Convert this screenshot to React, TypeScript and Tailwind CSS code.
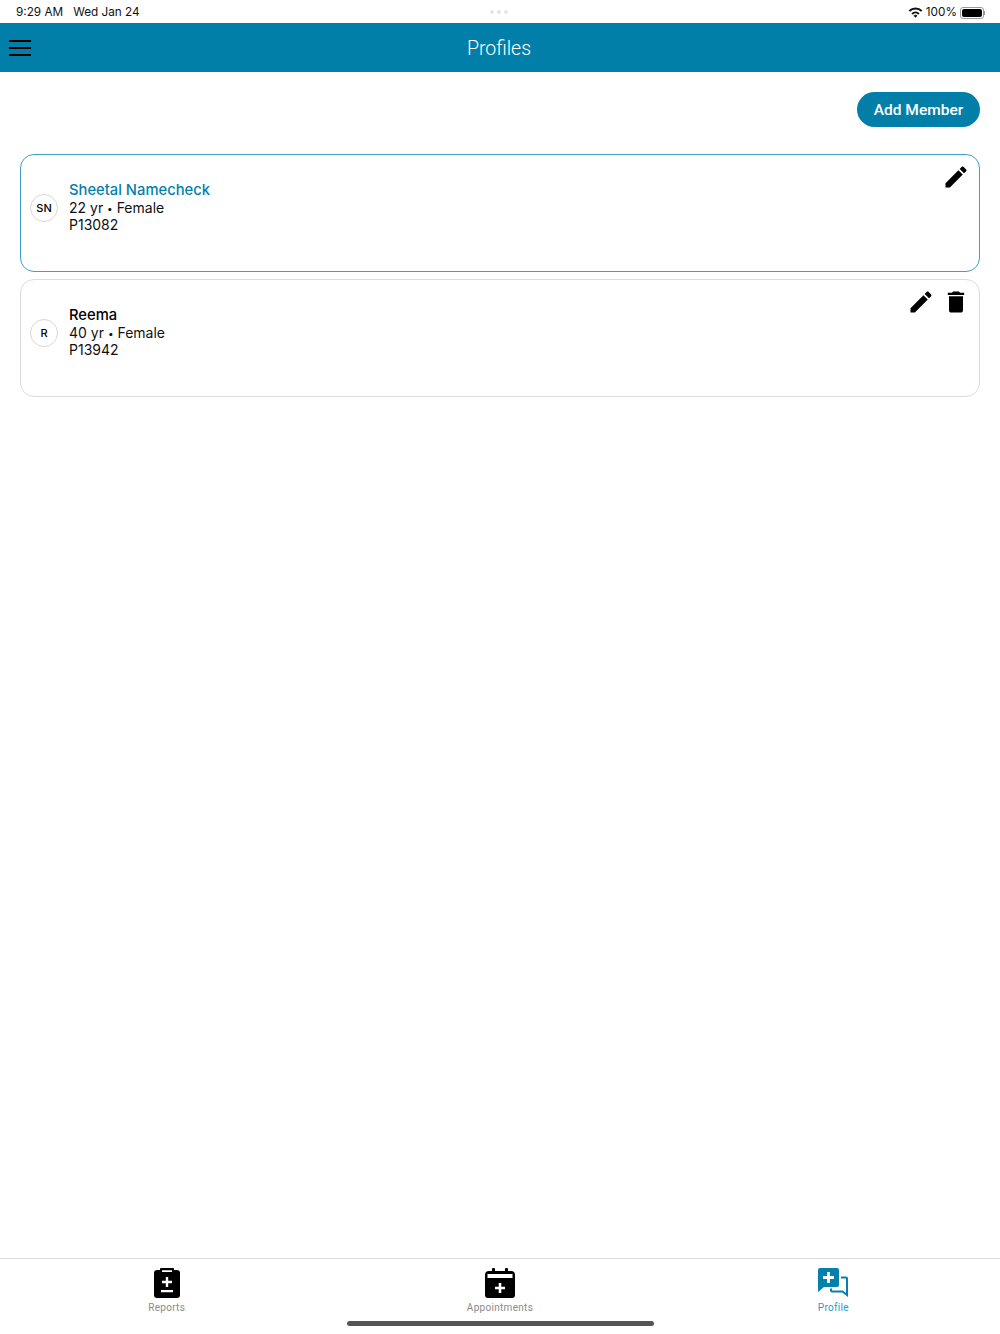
import React from 'react';

const PencilIcon = () => (
    <svg viewBox="0 0 24 24" fill="currentColor" className="w-7 h-7 text-black">
        <path d="M3 17.25V21h3.75L17.81 9.94l-3.75-3.75L3 17.25zM20.71 7.04c.39-.39.39-1.02 0-1.41l-2.34-2.34c-.39-.39-1.02-.39-1.41 0l-1.83 1.83 3.75 3.75 1.83-1.83z" />
    </svg>
);

const TrashIcon = () => (
    <svg viewBox="0 0 24 24" fill="currentColor" className="w-7 h-7 text-black">
        <path d="M6 19c0 1.1.9 2 2 2h8c1.1 0 2-.9 2-2V7H6v12zM19 4h-3.5l-1-1h-5l-1 1H5v2h14V4z" />
    </svg>
);

const ReportsIcon = () => (
    <svg viewBox="0 0 26 30" className="w-[26px] h-[30px] text-black">
        <path
            fill="currentColor"
            fillRule="evenodd"
            d="M3 2h3V1a1 1 0 0 1 1-1h12a1 1 0 0 1 1 1v1h3a3 3 0 0 1 3 3v22a3 3 0 0 1-3 3H3a3 3 0 0 1-3-3V5a3 3 0 0 1 3-3zM8 2.200V4h10V2.200zM11.800 9v3.800H8v2.400h3.800V19h2.400v-3.800H18v-2.400h-3.800V9zM7 22v2.200h12V22z"
        />
    </svg>
);

const AppointmentsIcon = () => (
    <svg viewBox="0 0 30 30" className="w-[30px] h-[30px] text-black">
        <path
            fill="currentColor"
            fillRule="evenodd"
            d="M8 0h1a1 1 0 0 1 1 1v2h10V1a1 1 0 0 1 1-1h1a1 1 0 0 1 1 1v2h3a4 4 0 0 1 4 4v20a3 3 0 0 1-3 3H3a3 3 0 0 1-3-3V7a4 4 0 0 1 4-4h3V1a1 1 0 0 1 1-1zM2.500 6v4h25V6zM13.700 15v3.700H10v2.600h3.700V25h2.600v-3.700H20v-2.600h-3.700V15z"
        />
    </svg>
);

const ProfileIcon = () => (
    <svg viewBox="0 0 30 30" className="w-[30px] h-[30px] text-[#0580ab]">
        <path
            fill="currentColor"
            fillRule="evenodd"
            d="M2 0h17a2 2 0 0 1 2 2v15a2 2 0 0 1-2 2H6l-6 5V2a2 2 0 0 1 2-2zM9.100 4v4.100H5v2.800h4.100V15h2.800v-4.100H16V8.100h-4.100V4z"
        />
        <path
            fill="none"
            stroke="currentColor"
            strokeWidth="2"
            d="M23 9.500h5a1 1 0 0 1 1 1V27l-4.500-3.500H14a1 1 0 0 1-1-1v-2"
        />
    </svg>
);

interface Member {
    initials: string;
    name: string;
    details: string;
    code: string;
    active: boolean;
}

const members: Member[] = [
    { initials: 'SN', name: 'Sheetal Namecheck', details: '22 yr', code: 'P13082', active: true },
    { initials: 'R', name: 'Reema', details: '40 yr', code: 'P13942', active: false },
];

const MemberCard: React.FC<{ member: Member }> = ({ member }) => (
    <div
        className={`h-[118px] rounded-[14px] border flex pl-[9px] pr-[9px] ${
            member.active ? 'border-[#3f9fc4]' : 'border-[#dcdcdc]'
        }`}
    >
        <div className="w-[28px] h-[28px] mt-[39px] rounded-full border border-[#d8d8d8] flex items-center justify-center text-[11px] font-medium text-black shrink-0">
            {member.initials}
        </div>
        <div className="ml-[11px] pt-[26px] flex flex-col text-[14px] leading-[17px] text-[#111]">
            <span className={`text-[14.75px] leading-[18px] font-medium ${member.active ? 'text-[#0580ab]' : 'text-black'}`}>
                {member.name}
            </span>
            <span>{member.details} <span className="text-[10px] leading-[0] align-[1px]">•</span> Female</span>
            <span>{member.code}</span>
        </div>
        <div className="ml-auto pt-[8px] flex gap-[7px] items-start">
            <PencilIcon />
            {!member.active && <TrashIcon />}
        </div>
    </div>
);

const tabs = [
    { label: 'Reports', icon: <ReportsIcon />, active: false },
    { label: 'Appointments', icon: <AppointmentsIcon />, active: false },
    { label: 'Profile', icon: <ProfileIcon />, active: true },
];

export default function App() {
    return (
        <div className="relative w-[1000px] h-[1334px] flex flex-col bg-white overflow-hidden font-['Inter',sans-serif]">
            <div className="h-[23px] shrink-0 flex items-center justify-between pl-[16px] pr-[15px] pt-[2px] text-[11.75px] text-[#111]">
                <div className="flex gap-[10px]">
                    <span>9:29 AM</span>
                    <span>Wed Jan 24</span>
                </div>
                <div className="flex items-center gap-[3px]">
                    <svg viewBox="0 0 24 24" fill="currentColor" className="w-[15px] h-[15px]">
                        <path d="M12 20.500l3-3.500a4.200 4.200 0 0 0-6 0zM5.500 13l2.200 2.400a6.300 6.300 0 0 1 8.600 0l2.200-2.400a9.500 9.500 0 0 0-13 0zM1 8.500l2.200 2.400a12.800 12.800 0 0 1 17.600 0L23 8.500a16 16 0 0 0-22 0z" />
                    </svg>
                    <span>100%</span>
                    <div className="flex items-center">
                        <div className="w-[24px] h-[12px] rounded-[3px] border border-[#999] p-[1px]">
                            <div className="w-full h-full rounded-[2px] bg-black" />
                        </div>
                        <div className="w-[1px] h-[4px] bg-[#999]" />
                    </div>
                </div>
            </div>

            <header className="h-[49px] shrink-0 bg-[#027fa9] flex items-center justify-center relative">
                <div className="absolute left-[9px] top-[17px] w-[22px] flex flex-col gap-[5px]">
                    <div className="h-[2px] bg-black" />
                    <div className="h-[2px] bg-black" />
                    <div className="h-[2px] bg-black" />
                </div>
                <h1 className="text-[19.5px] font-light text-white font-['Roboto',sans-serif] pt-[2px] pr-[2px]">Profiles</h1>
            </header>

            <main className="flex-1 px-[20px] pt-[20px] flex flex-col">
                <div className="flex justify-end">
                    <button className="w-[123px] h-[35px] pt-[2px] rounded-full bg-[#027fa9] text-white text-[15.5px] font-medium font-['Roboto',sans-serif]">
                        Add Member
                    </button>
                </div>
                <div className="mt-[27px] flex flex-col gap-[7px]">
                    {members.map((member) => (
                        <MemberCard key={member.code} member={member} />
                    ))}
                </div>
            </main>

            <nav className="h-[76px] shrink-0 border-t border-[#dcdcdc] grid grid-cols-3 font-['Roboto',sans-serif]">
                {tabs.map((tab) => (
                    <div key={tab.label} className="flex flex-col items-center pt-[8px]">
                        <div className="h-[32px] flex items-center justify-center">{tab.icon}</div>
                        <span className={`mt-[2px] text-[10px] leading-[14px] tracking-[0.3px] ${tab.active ? 'text-[#1b9bd1]' : 'text-[#8a8a8a]'}`}>
                            {tab.label}
                        </span>
                    </div>
                ))}
            </nav>

            <div className="absolute left-[347px] bottom-[8px] w-[307px] h-[5px] rounded-full bg-[#555]" />
            <div className="absolute left-[490px] top-[10px] flex gap-[3px]">
                <div className="w-[4px] h-[4px] rounded-full bg-[#e5e5e5]" />
                <div className="w-[4px] h-[4px] rounded-full bg-[#e5e5e5]" />
                <div className="w-[4px] h-[4px] rounded-full bg-[#e5e5e5]" />
            </div>
        </div>
    );
}
